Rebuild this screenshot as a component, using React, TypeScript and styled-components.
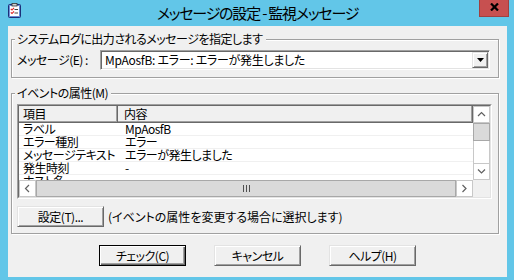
import React from 'react';
import styled, { createGlobalStyle } from 'styled-components';

const GlobalStyle = createGlobalStyle`
  html, body {
    margin: 0;
    padding: 0;
    background: #62c6e8;
  }
  body {
    font-family: "Noto Sans CJK JP", "Noto Sans", sans-serif;
    font-size: 12px;
    color: #000;
    font-feature-settings: "palt";
    letter-spacing: -0.5px;
  }
`;

const Window = styled.div`
  width: 514px;
  height: 280px;
  box-sizing: border-box;
  background: #62c6e8;
  display: flex;
  flex-direction: column;
  padding: 0 7px 3px 8px;
`;

const TitleBar = styled.div`
  height: 26px;
  flex: none;
  display: grid;
  grid-template-columns: 1fr auto 1fr;
  align-items: start;
`;

const AppIcon = styled.div`
  margin-top: 3px;
  line-height: 0;
`;

const Title = styled.div`
  font-size: 15px;
  line-height: 25px;
  letter-spacing: -1.2px;
  color: #000;
`;

const CloseButton = styled.div`
  justify-self: end;
  margin-right: -2px;
  width: 30px;
  height: 17px;
  box-sizing: border-box;
  background: #c75050;
  border: 1px solid #a04040;
  border-top: none;
  display: flex;
  justify-content: center;
  padding-top: 3px;
`;

const Client = styled.div`
  flex: 1;
  background: #f0f0f0;
  display: flex;
  flex-direction: column;
  padding: 6px 8px 0 3px;
`;

const Group = styled.fieldset<{ $top?: number; $bottom: number }>`
  margin: ${p => p.$top ?? 0}px 0 0 0;
  padding: 4px 6px ${p => p.$bottom}px 5px;
  border: 1px solid #a0a0a0;
  box-shadow: 1px 1px 0 #fff, inset 1px 1px 0 #fff;
  min-width: 0;
`;

const Legend = styled.legend`
  margin-left: -2px;
  padding: 0 3px 0 2px;
  line-height: 14px;
  background: #f0f0f0;
`;

const FieldRow = styled.div`
  display: flex;
  align-items: center;
  padding-right: 2px;
`;

const FieldLabel = styled.div`
  width: 83px;
  flex: none;
  line-height: 14px;
`;

const Combo = styled.div`
  flex: 1;
  height: 20px;
  box-sizing: border-box;
  display: flex;
  align-items: center;
  background: #fff;
  border: 1px solid;
  border-color: #a0a0a0 #fff #fff #a0a0a0;
  box-shadow: inset 1px 1px 0 #696969, inset -1px -1px 0 #e3e3e3;
  padding: 1px 1px 1px 4px;
`;

const ComboText = styled.div`
  flex: 1;
  line-height: 14px;
  white-space: nowrap;
  letter-spacing: -0.3px;
`;

const DropButton = styled.div`
  width: 16px;
  height: 16px;
  box-sizing: border-box;
  background: #f0f0f0;
  border: 1px solid;
  border-color: #e3e3e3 #696969 #696969 #e3e3e3;
  box-shadow: inset 1px 1px 0 #fff, inset -1px -1px 0 #a0a0a0;
  display: flex;
  align-items: center;
  justify-content: center;
`;

const ListFrame = styled.div`
  height: 95px;
  box-sizing: border-box;
  border: 1px solid;
  border-color: #a0a0a0 #fff #fff #a0a0a0;
  display: flex;
`;

const ListInner = styled.div`
  flex: 1;
  border: 1px solid;
  border-color: #696969 #e3e3e3 #e3e3e3 #696969;
  display: grid;
  grid-template-columns: 1fr 17px;
  grid-template-rows: 1fr 17px;
  background: #fff;
  overflow: hidden;
`;

const DataPane = styled.div`
  min-width: 0;
  overflow: hidden;
  display: flex;
  flex-direction: column;
`;

const HeaderRow = styled.div`
  display: flex;
  flex: none;
  height: 17px;
  box-sizing: border-box;
  background: #f0f0f0;
  border-bottom: 1px solid #696969;
  box-shadow: inset 0 -1px 0 #a0a0a0;
`;

const HeaderCell = styled.div<{ $w?: number; $pad: number }>`
  ${p => (p.$w ? `width: ${p.$w}px; flex: none;` : 'flex: 1;')}
  box-sizing: border-box;
  padding-left: ${p => p.$pad}px;
  line-height: 15px;
  border-right: 1px solid #696969;
  box-shadow: inset -1px 0 0 #a0a0a0;
`;

const DataRow = styled.div`
  display: flex;
  flex: none;
  height: 13px;
  box-sizing: border-box;
  border-bottom: 1px solid #f0f0f0;
`;

const DataCell = styled.div<{ $w?: number; $pad: number }>`
  ${p => (p.$w ? `width: ${p.$w}px; flex: none;` : 'flex: 1;')}
  padding-left: ${p => p.$pad}px;
  box-sizing: border-box;
  line-height: 12px;
  white-space: nowrap;
`;

const VScroll = styled.div`
  display: flex;
  flex-direction: column;
  background: #fff;
  min-height: 0;
`;

const HScroll = styled.div`
  display: flex;
  min-width: 0;
`;

const ArrowBox = styled.div`
  width: 17px;
  height: 17px;
  flex: none;
  box-sizing: border-box;
  background: #fff;
  border: 1px solid #c8c8c8;
  display: flex;
  align-items: center;
  justify-content: center;
  line-height: 0;
`;

const VThumb = styled.div`
  height: 18px;
  flex: none;
  box-sizing: border-box;
  background: #dadada;
  border: 1px solid #a8a8a8;
`;

const VTrack = styled.div`
  flex: 1;
  box-sizing: border-box;
  border-left: 1px solid #c8c8c8;
  border-right: 1px solid #c8c8c8;
`;

const HThumb = styled.div`
  flex: 1;
  box-sizing: border-box;
  background: #dadada;
  border: 1px solid #a8a8a8;
  display: flex;
  align-items: center;
  justify-content: center;
  line-height: 0;
`;

const Corner = styled.div`
  background: #f0f0f0;
`;

const ActionRow = styled.div`
  display: flex;
  align-items: center;
  margin-top: 7px;
  gap: 4px;
`;

const Hint = styled.div`
  line-height: 14px;
  white-space: nowrap;
  letter-spacing: 0;
`;

const Button = styled.div<{ $default?: boolean }>`
  width: 87px;
  height: 21px;
  box-sizing: border-box;
  display: flex;
  align-items: center;
  justify-content: center;
  line-height: 14px;
  background: #f0f0f0;
  border: 1px solid;
  border-color: ${p => (p.$default ? '#000' : '#e3e3e3 #696969 #696969 #e3e3e3')};
  box-shadow: ${p =>
    p.$default
      ? 'inset 1px 1px 0 #fff, inset -1px -1px 0 #696969, inset -2px -2px 0 #a0a0a0'
      : 'inset 1px 1px 0 #fff, inset -1px -1px 0 #a0a0a0'};
`;

const ButtonBar = styled.div`
  display: flex;
  justify-content: center;
  gap: 28px;
  margin-top: 11px;
  padding-left: 5px;
`;

const Chevron = ({ dir }: { dir: 'up' | 'down' | 'left' | 'right' }) => {
  const pts = {
    up: '1,5 4.5,1.5 8,5',
    down: '1,1.5 4.5,5 8,1.5',
    left: '5,1 1.5,4.5 5,8',
    right: '1.5,1 5,4.5 1.5,8',
  }[dir];
  const vertical = dir === 'up' || dir === 'down';
  return (
    <svg width={vertical ? 9 : 7} height={vertical ? 7 : 9} viewBox={vertical ? '0 0 9 7' : '0 0 7 9'}>
      <polyline points={pts} fill="none" stroke="#606060" strokeWidth="1.2" />
    </svg>
  );
};

const rows = [
  ['ラベル', 'MpAosfB'],
  ['エラー種別', 'エラー'],
  ['メッセージテキスト', 'エラーが発生しました'],
  ['発生時刻', '-'],
  ['ホスト名', ''],
];

export default function App() {
  return (
    <>
      <GlobalStyle />
      <Window>
        <TitleBar>
          <AppIcon>
            <svg width="13" height="15" viewBox="0 0 13 15">
              <rect x="0.5" y="1.5" width="12" height="13" rx="1" fill="#6a8fd6" stroke="#1c2f78" />
              <rect x="2" y="3" width="9" height="10" fill="#fff" />
              <rect x="4" y="0.5" width="5" height="2.5" fill="#d0d0d0" stroke="#333" strokeWidth="0.8" />
              <polyline points="2.8,5.8 4,7 6,4.8" fill="none" stroke="#e02020" strokeWidth="1.1" />
              <polyline points="2.8,9.3 4,10.5 6,8.3" fill="none" stroke="#e02020" strokeWidth="1.1" />
              <line x1="6.5" y1="6.5" x2="10" y2="6.5" stroke="#303030" strokeWidth="0.9" />
              <line x1="6.5" y1="10" x2="10" y2="10" stroke="#303030" strokeWidth="0.9" />
            </svg>
          </AppIcon>
          <Title>メッセージの設定 - 監視メッセージ</Title>
          <CloseButton>
            <svg width="9" height="8" viewBox="0 0 9 8">
              <path d="M1 0.5 L8 7.5 M8 0.5 L1 7.5" stroke="#000" strokeWidth="2.2" />
            </svg>
          </CloseButton>
        </TitleBar>
        <Client>
          <Group $bottom={7}>
            <Legend>システムログに出力されるメッセージを指定します</Legend>
            <FieldRow>
              <FieldLabel>メッセージ(E) :</FieldLabel>
              <Combo>
                <ComboText>MpAosfB: エラー: エラーが発生しました</ComboText>
                <DropButton>
                  <svg width="7" height="4" viewBox="0 0 7 4">
                    <path d="M0 0 H7 L3.5 4 Z" fill="#000" />
                  </svg>
                </DropButton>
              </Combo>
            </FieldRow>
          </Group>
          <Group $top={8} $bottom={6}>
            <Legend>イベントの属性(M)</Legend>
            <ListFrame>
              <ListInner>
                <DataPane>
                  <HeaderRow>
                    <HeaderCell $w={99} $pad={4}>項目</HeaderCell>
                    <HeaderCell $pad={6}>内容</HeaderCell>
                  </HeaderRow>
                  {rows.map(([k, v]) => (
                    <DataRow key={k}>
                      <DataCell $w={99} $pad={4}>{k}</DataCell>
                      <DataCell $pad={7}>{v}</DataCell>
                    </DataRow>
                  ))}
                </DataPane>
                <VScroll>
                  <ArrowBox><Chevron dir="up" /></ArrowBox>
                  <VThumb />
                  <VTrack />
                  <ArrowBox><Chevron dir="down" /></ArrowBox>
                </VScroll>
                <HScroll>
                  <ArrowBox><Chevron dir="left" /></ArrowBox>
                  <HThumb>
                    <svg width="7" height="7" viewBox="0 0 7 7">
                      <path d="M0.5 0 V7 M3.5 0 V7 M6.5 0 V7" stroke="#505050" strokeWidth="1" />
                    </svg>
                  </HThumb>
                  <ArrowBox><Chevron dir="right" /></ArrowBox>
                </HScroll>
                <Corner />
              </ListInner>
            </ListFrame>
            <ActionRow>
              <Button>設定(T)...</Button>
              <Hint>(イベントの属性を変更する場合に選択します)</Hint>
            </ActionRow>
          </Group>
          <ButtonBar>
            <Button $default>チェック(C)</Button>
            <Button>キャンセル</Button>
            <Button>ヘルプ(H)</Button>
          </ButtonBar>
        </Client>
      </Window>
    </>
  );
}
